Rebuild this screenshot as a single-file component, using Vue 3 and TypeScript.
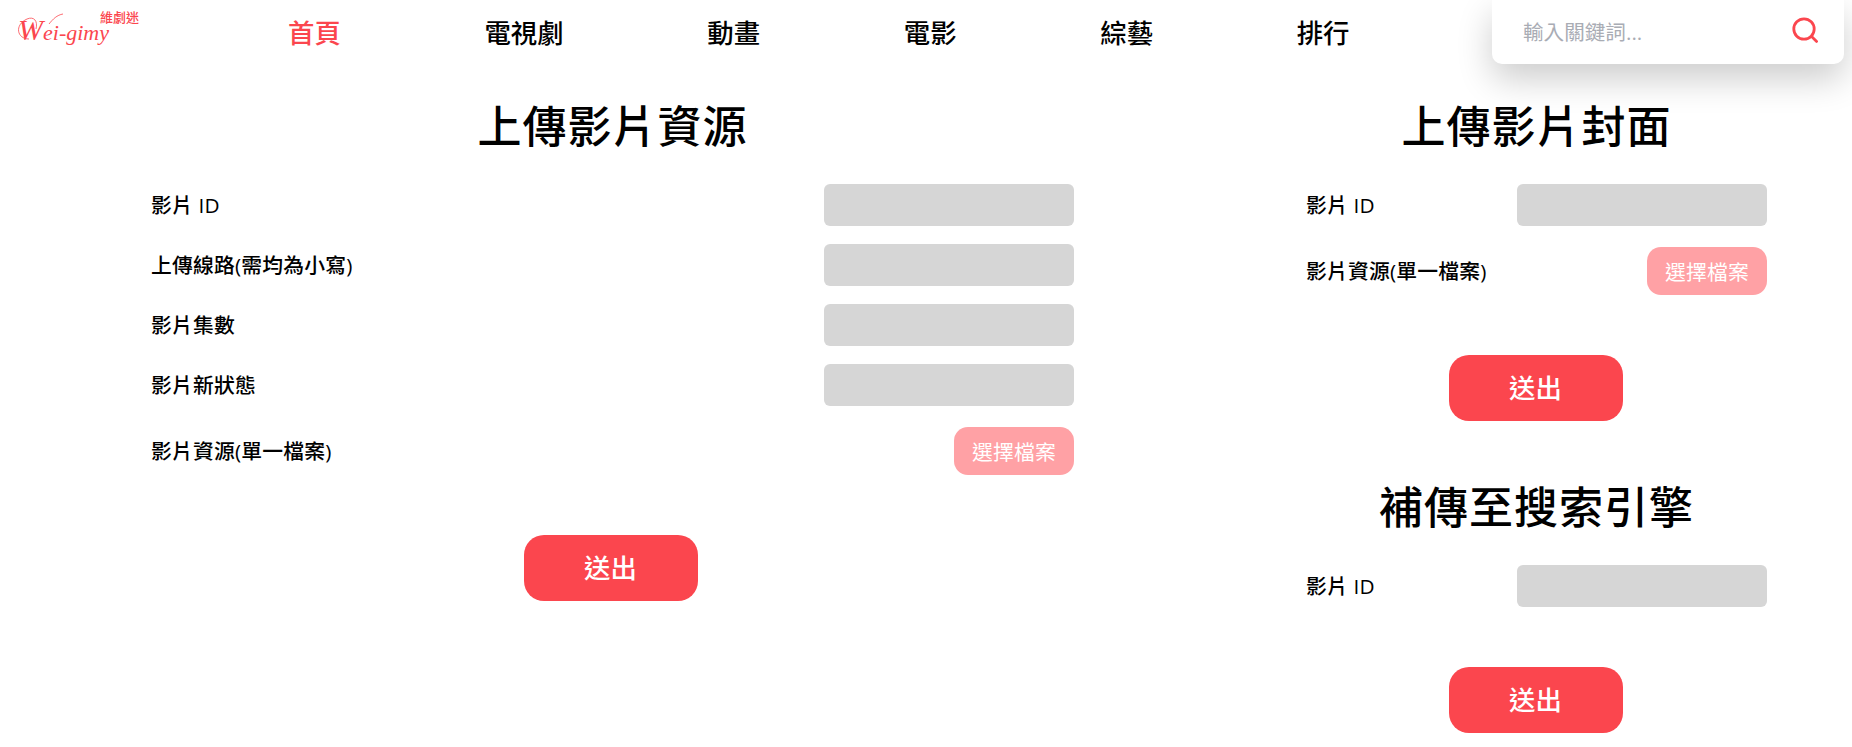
<template>
  <div class="page">
    <header class="nav">
      <a class="logo">
        <svg class="logo-swash" viewBox="0 0 70 48">
          <path d="M29 39C17 39 14 25 27 19C34 16 38 21 36 29" fill="none" stroke="currentColor" stroke-width="0.8" />
          <path d="M49 24C53 19 57 15 63 14" fill="none" stroke="currentColor" stroke-width="0.8" />
        </svg>
        <span class="logo-en"><span class="logo-w">W</span>ei-gimy</span>
        <span class="logo-zh">維劇迷</span>
      </a>
      <nav class="menu">
        <a v-for="(item, i) in menu" :key="item" class="menu-item" :class="{ active: i === 0 }">{{ item }}</a>
      </nav>
      <div class="search">
        <input class="search-input" type="text" placeholder="輸入關鍵詞..." />
        <svg class="search-icon" viewBox="0 0 26 26">
          <circle cx="12" cy="12" r="10.2" fill="none" stroke="currentColor" stroke-width="2.8" />
          <line x1="19.6" y1="19.6" x2="24.6" y2="24.4" stroke="currentColor" stroke-width="2.8" stroke-linecap="round" />
        </svg>
      </div>
    </header>

    <main class="content">
      <section class="col">
        <h1 class="title">上傳影片資源</h1>
        <div v-for="label in resourceFields" :key="label" class="field">
          <label>{{ label }}</label>
          <input class="text-input" type="text" />
        </div>
        <div class="field file-field">
          <label>影片資源(單一檔案)</label>
          <button class="file-btn" type="button">選擇檔案</button>
        </div>
        <button class="submit" type="button">送出</button>
      </section>

      <section class="col">
        <h1 class="title">上傳影片封面</h1>
        <div class="field">
          <label>影片 ID</label>
          <input class="text-input" type="text" />
        </div>
        <div class="field file-field">
          <label>影片資源(單一檔案)</label>
          <button class="file-btn" type="button">選擇檔案</button>
        </div>
        <button class="submit" type="button">送出</button>

        <h1 class="title second">補傳至搜索引擎</h1>
        <div class="field">
          <label>影片 ID</label>
          <input class="text-input" type="text" />
        </div>
        <button class="submit last" type="button">送出</button>
      </section>
    </main>
  </div>
</template>

<script setup lang="ts">
const menu: string[] = ['首頁', '電視劇', '動畫', '電影', '綜藝', '排行']
const resourceFields: string[] = ['影片 ID', '上傳線路(需均為小寫)', '影片集數', '影片新狀態']
</script>

<style>
body {
  background: #fff;
}
</style>

<style scoped>
.page {
  width: 1852px;
  height: 747px;
  overflow: hidden;
  font-family: "Open Sans", "Noto Sans CJK TC", sans-serif;
  color: #000;
}

.nav {
  display: flex;
  height: 64px;
}

.logo {
  position: relative;
  width: 288px;
  flex-shrink: 0;
  color: #fb464e;
}
.logo-swash {
  position: absolute;
  left: 0;
  top: 0;
  width: 70px;
  height: 48px;
}
.logo-en {
  position: absolute;
  left: 18px;
  top: 23px;
  font-family: "Liberation Serif", serif;
  font-style: italic;
  font-size: 22px;
  line-height: 14px;
  white-space: nowrap;
}
.logo-w {
  font-size: 30px;
}
.logo-zh {
  position: absolute;
  left: 100px;
  top: 11px;
  font-size: 13px;
  line-height: 12px;
  font-weight: 500;
}

.menu {
  display: flex;
  gap: 143.7px;
  align-items: center;
  height: 66px;
  flex: 1;
}
.menu-item {
  font-size: 26.4px;
  font-weight: 500;
  line-height: 34px;
}
.menu-item.active {
  color: #fb464e;
}

.search {
  position: relative;
  display: flex;
  align-items: center;
  width: 352px;
  height: 64px;
  margin-right: 8px;
  padding: 0 26px 0 31px;
  box-sizing: border-box;
  background: #fff;
  border-radius: 0 0 10px 10px;
  box-shadow: 0 15px 35px rgba(0, 0, 0, 0.2);
}
.search-input {
  flex: 1;
  min-width: 0;
  border: 0;
  outline: 0;
  padding: 0;
  font: inherit;
  font-size: 20.6px;
}
.search-input::placeholder {
  color: #a9acb4;
}
.search-icon {
  width: 26px;
  height: 26px;
  margin-top: -4px;
  color: #fb464e;
}

.content {
  display: flex;
  gap: 232px;
  padding: 32px 85px 0 151px;
}

.col {
  display: flex;
  flex-direction: column;
}
.col:first-child {
  width: 923px;
}
.col:last-child {
  width: 461px;
}

.title {
  margin: 0 0 28px;
  height: 60px;
  font-size: 44px;
  line-height: 60px;
  font-weight: 500;
  letter-spacing: 1px;
  text-align: center;
}
.title.second {
  margin-top: 56px;
}

.field {
  display: flex;
  align-items: center;
  justify-content: space-between;
  margin-bottom: 18px;
}
.file-field {
  margin: 3px 0 0;
}
.field label {
  margin-top: -3px;
  font-size: 20.8px;
  font-weight: 500;
  letter-spacing: 0.2px;
}

.text-input {
  width: 250px;
  height: 42px;
  padding: 0 10px;
  box-sizing: border-box;
  border: 0;
  border-radius: 6px;
  background: #d6d6d6;
}

.file-btn {
  width: 120px;
  height: 48px;
  padding: 0;
  border: 0;
  border-radius: 14px;
  background: #ffa1a5;
  color: #fff;
  font: inherit;
  font-size: 20.8px;
  letter-spacing: 0.2px;
}

.submit {
  align-self: center;
  width: 174px;
  height: 66px;
  margin-top: 60px;
  margin-right: 2px;
  padding: 0 0 4px;
  border: 0;
  border-radius: 20px;
  background: #fb464e;
  color: #fff;
  font: inherit;
  font-size: 26.4px;
  font-weight: 500;
}
.col:first-child .submit {
  margin-right: 4px;
}
.submit.last {
  margin-top: 42px;
}
</style>
